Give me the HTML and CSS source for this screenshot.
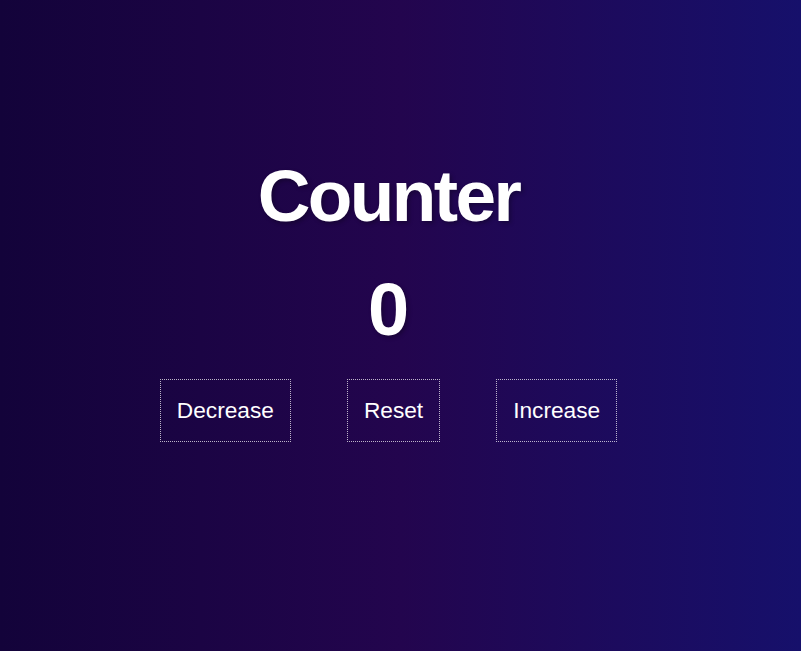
FILE: index.html
```html
<!DOCTYPE html>
<html lang="en">
<head>
<meta charset="utf-8">
<title>Counter</title>
<link rel="stylesheet" href="styles.css">
</head>
<body>
<main class="app">
  <h1 class="title">Counter</h1>
  <div class="value">0</div>
  <div class="controls">
    <button class="btn">Decrease</button>
    <button class="btn">Reset</button>
    <button class="btn">Increase</button>
  </div>
</main>
</body>
</html>
```

FILE: styles.css
```css
html, body {
  margin: 0;
  height: 100%;
}
body {
  background: linear-gradient(to right, #13033a 0%, #23054e 50%, #16106b 100%);
  font-family: "Liberation Sans", Arial, sans-serif;
  color: #fff;
}
.app {
  width: 777px;
  padding-top: 153px;
  display: flex;
  flex-direction: column;
  align-items: center;
}
.title {
  margin: 0;
  font-size: 73px;
  line-height: 85px;
  font-weight: 700;
  letter-spacing: -2.6px;
  text-shadow: 2px 2px 4px rgba(0, 0, 0, 0.3);
}
.value {
  margin-top: 29px;
  font-size: 74px;
  line-height: 85px;
  font-weight: 700;
  text-shadow: 2px 2px 4px rgba(0, 0, 0, 0.3);
}
.controls {
  margin-top: 27px;
  display: flex;
  gap: 56px;
}
.btn {
  background: transparent;
  color: #fff;
  font-family: "Liberation Sans", Arial, sans-serif;
  font-size: 22.7px;
  line-height: 27px;
  padding: 17px 16px 17px;
  border: 1px dotted rgba(255, 255, 255, 0.7);
  border-radius: 0;
}
```
